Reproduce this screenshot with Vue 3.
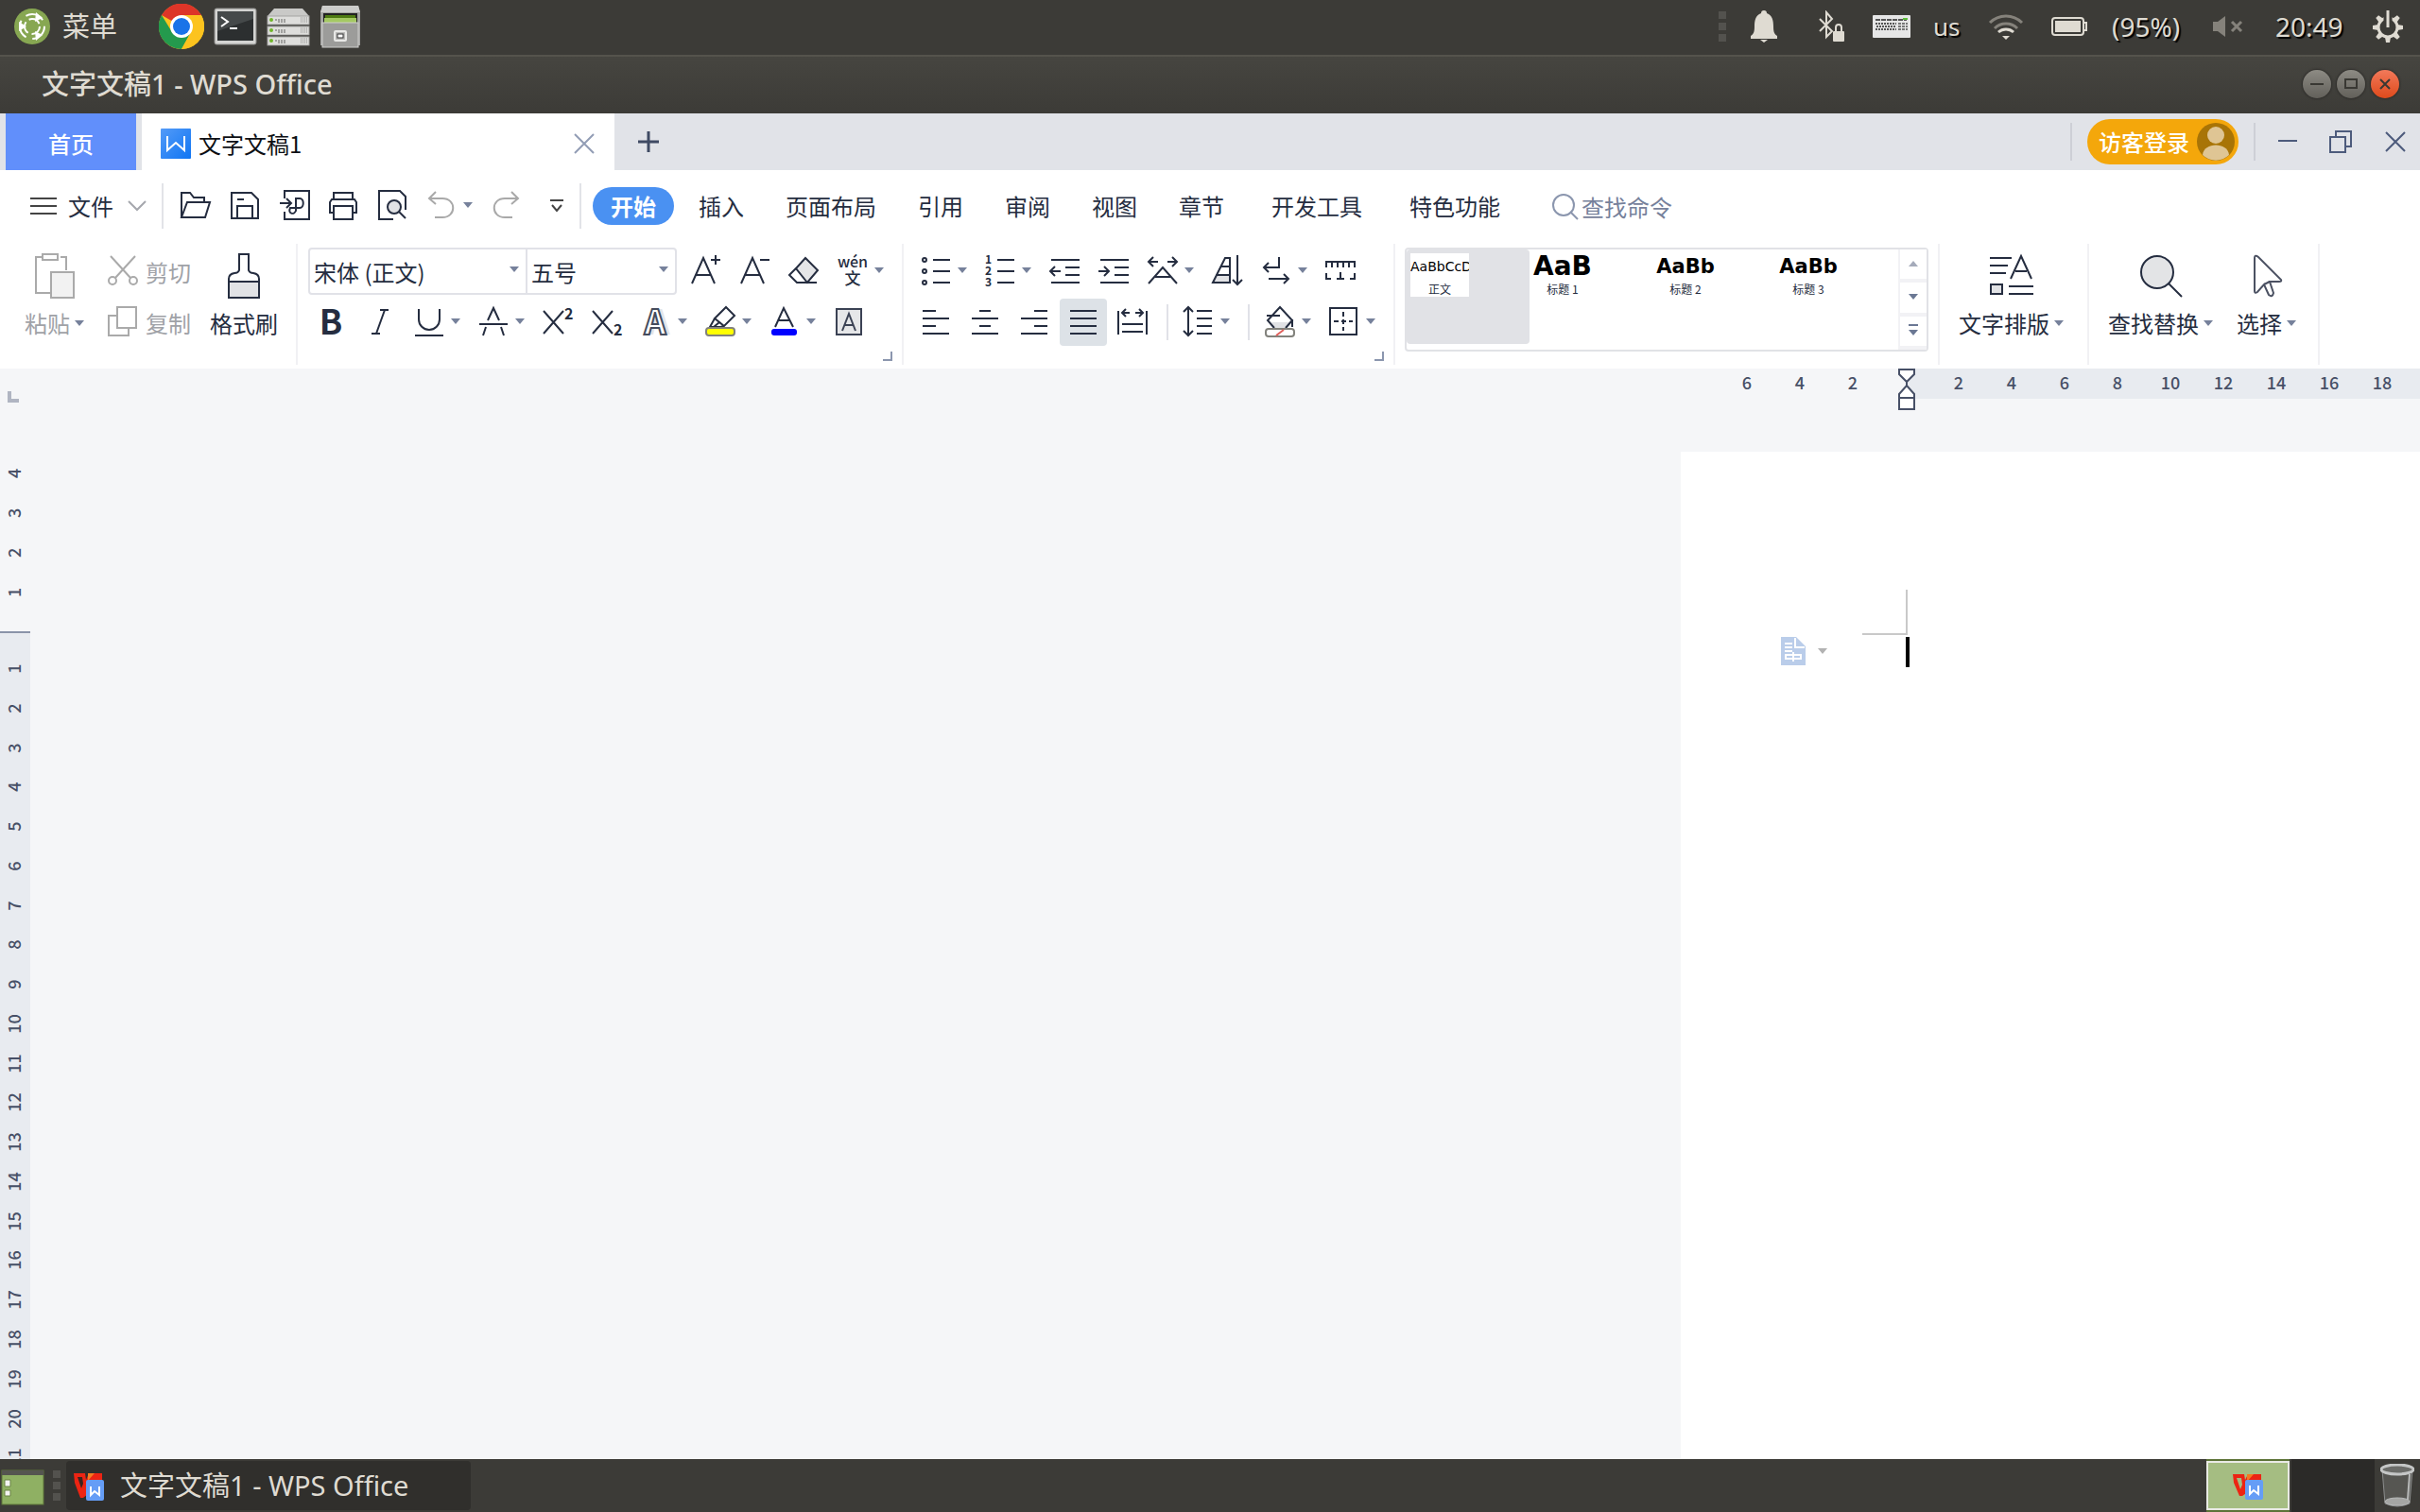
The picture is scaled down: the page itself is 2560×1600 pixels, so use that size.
<script setup>
import { ref } from 'vue'

const A_LARGE = '<path d="M2 30 14 3 26 30M6 21H22"/>'

const icons = {
  open: '<path d="M1 29V3H10L14 8H25V12M1 29 7 13H31L26 29Z"/>',
  save: '<path d="M2 3H23L30 10V30H2ZM8 30V17H24V30M8 10H15"/>',
  pdf: '<path d="M6 9V1H32V31H6V23M1 14H12M8 9 13 14 8 19M17 9H22C27 9 27 19 22 19H12C9 25 16 27 18 22V9"/>',
  print: '<path d="M6 10V3H26V10M6 24H2V13L4 10H28L30 13V24H26M6 17H26V31H6Z"/>',
  preview: '<path d="M17 31H2V1H24L30 7V21"/><circle cx="18" cy="18" r="7" fill="#e1e2e5"/><path d="M23 23 30 30"/>',
  undo: '<path d="M10 2 3 9 10 15M3 9H17C32 9 32 29 17 29H9" stroke="#a9a9a9"/>',
  redo: '<path d="M22 2 29 9 22 15M29 9H15C0 9 0 29 15 29H23" stroke="#a9a9a9"/>',
  grow: A_LARGE + '<path d="M27 0V10M22 5H32"/>',
  shrink: A_LARGE + '<path d="M22 5H32"/>',
  eraser: '<path d="M18 3 31 16 20 29 8 14Z" fill="#e4e5e7"/><path d="M8 14 1 21 9 29H30"/>',
  pinyin: '<text x="16" y="13" text-anchor="middle" font-size="16" font-weight="500">wén</text><text x="16" y="31" text-anchor="middle" font-size="17" font-weight="500">文</text>',
  bold: '<text x="16" y="30" text-anchor="middle" font-size="36" font-weight="700">B</text>',
  italic: '<path d="M16 4H25M7 29H16M21 4 12 29"/>',
  underline: '<path d="M5 3V14A11 11 0 0 0 27 14V3M1 31H31"/>',
  strike: '<path d="M10 15 16 2 22 15M1 19H31M5 31 8 22M27 31 24 22"/>',
  sup: '<path d="M1 5 22 29M22 5 1 29"/><text x="23" y="14" font-size="16" font-weight="700">2</text>',
  sub: '<path d="M1 5 22 29M22 5 1 29"/><text x="23" y="31" font-size="16" font-weight="700">2</text>',
  effect: '<text x="19" y="30" text-anchor="middle" font-size="36" font-weight="700" style="fill:#e3e4e8">A</text><text x="15" y="30" text-anchor="middle" font-size="36" font-weight="700" style="fill:#fff;stroke:#454c5d;stroke-width:2">A</text>',
  highlight: '<path d="M22 1 31 10 20 21 10 13ZM10 13 5 22H16L20 21M15 17 9 22"/><rect x="1" y="23" width="30" height="8" rx="3" fill="#ff0" stroke="#82827c"/>',
  color: '<path d="M6 22 15 2 25 22M9 15H21"/><rect x="2" y="24" width="27" height="7" rx="3" fill="#00f" stroke="none"/>',
  shade: '<rect x="3" y="3" width="26" height="27" fill="#e6e7e9" stroke="#3b4254"/><path d="M9 26 16 8 23 26M11 20H21" stroke="#3b4254"/>',
  bullets: '<path d="M13 5H31M13 17H31M13 29H31"/><circle cx="4" cy="5" r="2"/><circle cx="4" cy="17" r="2"/><circle cx="4" cy="29" r="2"/>',
  numbers: '<path d="M13 5H31M13 17H31M13 29H31"/><text x="0" y="9" font-size="12" font-weight="700">1</text><text x="0" y="21" font-size="12" font-weight="700">2</text><text x="0" y="33" font-size="12" font-weight="700">3</text>',
  outdent: '<path d="M2 5H32M17 13H32M17 21H32M2 29H32M1 17H12M6 12 1 17 6 22"/>',
  indent: '<path d="M2 5H32M17 13H32M17 21H32M2 29H32M0 17H11M6 12 11 17 6 22"/>',
  spread: '<path d="M1 7H11M6 2 1 7 6 12M21 7H31M26 2 31 7 26 12M1 30 16 13 31 30M8 23H24"/>',
  sort: '<path d="M1 29 5 21H19V29Z" fill="#e1e2e5"/><path d="M5 21 14 3H19V21M10 12H19M27 0V31M22 26 27 31 32 26"/>',
  wrap: '<path d="M19 2V13H3M8 8 3 13 8 18M8 25H29M24 20 29 25 24 30"/>',
  tabs: '<path d="M1 13V7H31V13M7 7V13M13 7V13M19 7V13M25 7V13M1 19V25H6M31 19V25H26M16 18V25M12 25H20"/>',
  left: '<path d="M2 5H16M2 13H30M2 21H16M2 29H30"/>',
  center: '<path d="M10 5H22M2 13H30M10 21H22M2 29H30"/>',
  right: '<path d="M16 5H30M2 13H30M16 21H30M2 29H30"/>',
  justify: '<path d="M2 5H30M2 13H30M2 21H30M2 29H30"/>',
  distribute: '<path d="M1 5V30M31 5V30M5 7H13M9 3 5 7 9 11M19 7H27M23 3 27 7 23 11M5 19H27M5 27H27"/>',
  spacing: '<path d="M14 5H30M14 13H30M14 21H30M14 29H30M5 2V30M0 6 5 1 10 6M0 26 5 31 10 26"/>',
  fill: '<path d="M7 17H29L20 26H12Z" fill="#e1e2e5" stroke="none"/><path d="M10 23 3 15 16 1 29 15 22 23M2 10H16M29 14V22"/><rect x="1" y="24" width="30" height="8" rx="3" fill="#fff" stroke="#82827c"/><path d="M12 31 20 25" stroke="#e0605c"/>',
  border: '<rect x="1" y="2" width="28" height="28"/><path d="M15 6V26M5 16H25" stroke-dasharray="5 3"/>'
}

const quick = [
  { id: 'open', name: '打开' },
  { id: 'save', name: '保存' },
  { id: 'pdf', name: '输出为PDF' },
  { id: 'print', name: '打印' },
  { id: 'preview', name: '打印预览' },
  { id: 'undo', name: '撤销', drop: true },
  { id: 'redo', name: '恢复' }
]
const menus = ['插入', '页面布局', '引用', '审阅', '视图', '章节', '开发工具', '特色功能']
const fontTop = [
  { id: 'grow', name: '增大字号' },
  { id: 'shrink', name: '减小字号' },
  { id: 'eraser', name: '清除格式' },
  { id: 'pinyin', name: '拼音指南', drop: true }
]
const fontBottom = [
  { id: 'bold', name: '加粗' },
  { id: 'italic', name: '倾斜' },
  { id: 'underline', name: '下划线', drop: true },
  { id: 'strike', name: '删除线', drop: true },
  { id: 'sup', name: '上标' },
  { id: 'sub', name: '下标' },
  { id: 'effect', name: '文字效果', drop: true },
  { id: 'highlight', name: '突出显示', drop: true },
  { id: 'color', name: '字体颜色', drop: true },
  { id: 'shade', name: '字符底纹' }
]
const paraTop = [
  { id: 'bullets', name: '项目符号', drop: true },
  { id: 'numbers', name: '编号', drop: true },
  { id: 'outdent', name: '减少缩进' },
  { id: 'indent', name: '增加缩进' },
  { id: 'spread', name: '中文版式', drop: true },
  { id: 'sort', name: '排序' },
  { id: 'wrap', name: '显示段落标记', drop: true },
  { id: 'tabs', name: '制表位' }
]
const paraBottom = [
  { id: 'left', name: '左对齐' },
  { id: 'center', name: '居中' },
  { id: 'right', name: '右对齐' },
  { id: 'justify', name: '两端对齐', on: true },
  { id: 'distribute', name: '分散对齐', sep: true },
  { id: 'spacing', name: '行距', drop: true, sep: true },
  { id: 'fill', name: '底纹颜色', drop: true },
  { id: 'border', name: '边框', drop: true }
]
const styles = [
  { sample: 'AaBbCcDd', label: '正文', kind: 'body' },
  { sample: 'AaBb', label: '标题 1', kind: 'h1' },
  { sample: 'AaBb', label: '标题 2', kind: 'h2' },
  { sample: 'AaBb', label: '标题 3', kind: 'h2' }
]
const font = ref('宋体 (正文)')
const size = ref('五号')
const query = ref('')
</script>

<template>
  <div class="desktop">
    <header class="panel">
      <button class="menu-btn">
        <svg width="40" height="42" viewBox="0 0 40 42" aria-hidden="true">
          <circle cx="20" cy="21" r="19" fill="#87a752" />
          <circle cx="20" cy="21" r="13" fill="none" stroke="#fff" stroke-width="2" stroke-dasharray="20 7" />
          <circle cx="20" cy="21" r="8" fill="none" stroke="#fff" stroke-width="2" stroke-dasharray="13 4" />
          <path d="M6 16v10l8-5zM24 6l7 6-8 4zM24 36l7-6-8-4z" fill="#fff" />
        </svg>
        <span>菜单</span>
      </button>
      <div class="launchers">
        <button aria-label="Chrome">
          <svg width="48" height="48" viewBox="0 0 48 48">
            <circle cx="24" cy="24" r="24" fill="#fcc31e" />
            <path d="M24 24 3 12A24 24 0 0 1 45 12H24Z" fill="#dd3528" />
            <path d="M24 48A24 24 0 0 1 3 12L14 30 24 35 34 30Z" fill="#249a4d" />
            <path d="M24 48A24 24 0 0 0 45 12H24L34 30Z" fill="#fcc31e" />
            <circle cx="24" cy="24" r="12" fill="#fff" />
            <circle cx="24" cy="24" r="9" fill="#1a73e8" />
          </svg>
        </button>
        <button aria-label="终端">
          <svg width="46" height="40" viewBox="0 0 46 40">
            <rect x="1" y="1" width="44" height="38" rx="2" fill="#d4d4d2" stroke="#8b8b89" />
            <rect x="4" y="4" width="38" height="31" fill="#2c2f30" />
            <path d="M4 4H42V12L4 25Z" fill="#45494a" />
            <path d="M8 10 15 15 8 20M17 22H25" fill="none" stroke="#fff" stroke-width="2" />
          </svg>
        </button>
        <button aria-label="服务器">
          <svg width="46" height="42" viewBox="0 0 46 42">
            <path d="M8 2H38L45 10H1Z" fill="#c9c9c7" />
            <g v-for="y in [10, 21, 32]" :key="y">
              <rect x="1" :y="y" width="44" height="9" fill="#dededc" stroke="#a3a3a1" />
              <path :d="`M0 ${y + 10}h46`" stroke="#4a4a48" />
              <circle cx="5" :cy="y + 4" r="2" fill="#6fb52a" />
              <path :d="`M9 ${y + 4}h12M12 ${y + 6}h9`" stroke="#656563" stroke-dasharray="2 1" />
              <path :d="`M36 ${y + 2}h8M36 ${y + 4}h8M36 ${y + 6}h8`" stroke="#8b8b89" stroke-dasharray="1 1" />
            </g>
          </svg>
        </button>
        <button aria-label="文件管理器">
          <svg width="44" height="46" viewBox="0 0 44 46">
            <path d="M3 1H41L43 8V43H1V8Z" fill="#a5a5a3" />
            <path d="M3 1H41L43 8H1Z" fill="#cdcdcb" />
            <rect x="4" y="9" width="36" height="10" fill="#222" />
            <rect x="6" y="11" width="32" height="3" fill="#4e7a12" />
            <rect x="5" y="14" width="34" height="5" fill="#a4c963" />
            <rect x="3" y="19" width="38" height="26" fill="#9c9c9a" stroke="#cfcfcd" />
            <rect x="16" y="28" width="12" height="10" rx="1" fill="#b9b9b7" stroke="#e8e8e6" stroke-width="2" />
            <rect x="19" y="31" width="6" height="4" fill="#fff" stroke="#333" />
          </svg>
        </button>
      </div>
      <div class="tray">
        <span class="grip"><i></i><i></i><i></i></span>
        <svg class="t-bell" width="28" height="34" viewBox="0 0 28 34">
          <path d="M14 0a3 3 0 0 1 3 3c6 2 7 8 7 14 0 6 1 8 4 10v3H0v-3c3-2 4-4 4-10C4 11 5 5 11 3a3 3 0 0 1 3-3zM10 31h8l-4 3z" fill="#dfdbd2" />
        </svg>
        <svg class="t-bt" width="28" height="34" viewBox="0 0 28 34">
          <path d="M1 9 14 22 8 28V2L14 9 1 22" fill="none" stroke="#dfdbd2" stroke-width="2" />
          <rect x="15" y="22" width="12" height="11" rx="1" fill="#dfdbd2" />
          <path d="M18 23V18a3 3 0 0 1 6 0V23" fill="none" stroke="#dfdbd2" stroke-width="2" />
        </svg>
        <svg class="t-kbd" width="40" height="24" viewBox="0 0 40 24">
          <rect width="40" height="24" rx="1" fill="#e6e6e6" />
          <path d="M3 5H36" stroke="#555" stroke-width="2" stroke-dasharray="5 1" />
          <path d="M3 9H25M4 12H25M3 15H25" stroke="#555" stroke-width="2" stroke-dasharray="2 1" />
          <path d="M27 9H37M27 12H37M27 15H37" stroke="#777" stroke-width="2" stroke-dasharray="3 1" />
          <path d="M32 4H37" stroke="#5cbd3a" stroke-width="2" />
        </svg>
        <span class="t-lang">us</span>
        <svg class="t-wifi" width="38" height="28" viewBox="0 0 38 28">
          <path d="M2 10a24 24 0 0 1 34 0M7 16a17 17 0 0 1 24 0" fill="none" stroke="#85827b" stroke-width="3" />
          <path d="M11 20a12 12 0 0 1 16 0" fill="none" stroke="#dfdbd2" stroke-width="3" />
          <path d="M15 24h8l-4 4z" fill="#dfdbd2" />
        </svg>
        <svg class="t-bat" width="38" height="20" viewBox="0 0 38 20">
          <rect x="1" y="1" width="33" height="18" rx="3" fill="none" stroke="#dfdbd2" stroke-width="2" />
          <rect x="4" y="4" width="27" height="12" fill="#dfdbd2" />
          <path d="M35 6h2v8h-2" fill="none" stroke="#dfdbd2" stroke-width="2" />
        </svg>
        <span class="t-pct">(95%)</span>
        <svg class="t-vol" width="32" height="22" viewBox="0 0 32 22">
          <path d="M0 6H5L13 0V22L5 16H0Z" fill="#85827b" />
          <path d="M20 6 30 16M30 6 20 16" stroke="#85827b" stroke-width="3" />
        </svg>
        <span class="t-time">20:49</span>
        <svg class="t-gear" width="32" height="34" viewBox="0 0 32 34">
          <path v-for="a in [45, 90, 135, 180, 225, 270, 315]" :key="a" d="M14 2H18L19 8H13Z" fill="#dfdbd2" :transform="`rotate(${a} 16 18)`" />
          <circle cx="16" cy="18" r="10" fill="none" stroke="#dfdbd2" stroke-width="3" />
          <path d="M16 4V16" stroke="#3c3b37" stroke-width="9" />
          <path d="M16 0V18" stroke="#dfdbd2" stroke-width="3" />
        </svg>
      </div>
    </header>

    <div class="titlebar">
      <h1>文字文稿1 - WPS Office</h1>
      <div class="win-btns">
        <button aria-label="最小化"><svg width="30" height="30" viewBox="0 0 30 30"><path d="M8 15H22" /></svg></button>
        <button aria-label="最大化"><svg width="30" height="30" viewBox="0 0 30 30"><rect x="9" y="10" width="12" height="9" /></svg></button>
        <button class="close" aria-label="关闭"><svg width="30" height="30" viewBox="0 0 30 30"><path d="M10 10 20 20M20 10 10 20" /></svg></button>
      </div>
    </div>

    <div class="tabbar">
      <button class="home">首页</button>
      <div class="doc-tab">
        <svg width="32" height="32" viewBox="0 0 32 32" aria-hidden="true">
          <defs>
            <linearGradient id="wg" x1="0" y1="0" x2="1" y2="1">
              <stop offset="0" stop-color="#549bf8" />
              <stop offset="1" stop-color="#0f75f3" />
            </linearGradient>
          </defs>
          <rect width="32" height="32" rx="1" fill="url(#wg)" />
          <path d="M7 8V23L16 15 25 23V8" fill="none" stroke="#fff" stroke-width="2" />
        </svg>
        <span>文字文稿1</span>
        <button class="tab-close" aria-label="关闭标签"><svg width="22" height="22" viewBox="0 0 22 22"><path d="M1 1 21 21M21 1 1 21" /></svg></button>
      </div>
      <button class="add" aria-label="新建"><svg width="24" height="24" viewBox="0 0 24 24"><path d="M12 1V23M1 12H23" /></svg></button>
      <div class="session">
        <i class="bar"></i>
        <button class="login">
          <span>访客登录</span>
          <svg width="40" height="40" viewBox="0 0 40 40" aria-hidden="true">
            <circle cx="20" cy="20" r="20" fill="#a87406" />
            <circle cx="20" cy="13" r="9" fill="#dfc594" />
            <path d="M6 34C7 20 33 20 34 34A20 20 0 0 1 6 34Z" fill="#dfc594" />
          </svg>
        </button>
        <i class="bar"></i>
        <button class="w-btn" aria-label="最小化窗口"><svg width="24" height="24" viewBox="0 0 24 24"><path d="M2 11H22" /></svg></button>
        <button class="w-btn" aria-label="还原窗口"><svg width="24" height="24" viewBox="0 0 24 24"><path d="M1 7H17V23H1ZM7 7V1H23V17H17" /></svg></button>
        <button class="w-btn" aria-label="关闭窗口"><svg width="24" height="24" viewBox="0 0 24 24"><path d="M2 2 22 22M22 2 2 22" /></svg></button>
      </div>
    </div>

    <nav class="menubar">
      <button class="file">
        <svg width="28" height="20" viewBox="0 0 28 20" aria-hidden="true"><path d="M0 2H28M0 10H28M0 18H28" stroke="#444" /></svg>
        <span>文件</span>
        <svg class="chev" width="20" height="12" viewBox="0 0 20 12" aria-hidden="true"><path d="M1 1 10 10 19 1" stroke="#a5a7ad" /></svg>
      </button>
      <i class="bar"></i>
      <div class="quick">
        <button v-for="t in quick" :key="t.id" class="tool" :aria-label="t.name">
          <svg class="ico" width="32" height="32" viewBox="0 0 32 32" v-html="icons[t.id]"></svg>
          <i v-if="t.drop" class="caret"></i>
        </button>
        <button class="custom" aria-label="自定义快速访问工具栏">
          <svg width="16" height="16" viewBox="0 0 16 16"><path d="M1 2H15M3 7 8 13 13 7" stroke="#444" /></svg>
        </button>
      </div>
      <i class="bar"></i>
      <button class="menu active">开始</button>
      <button v-for="(m, i) in menus" :key="m" class="menu" :class="{ far: i > 5 }">{{ m }}</button>
      <label class="search">
        <svg width="30" height="30" viewBox="0 0 30 30" aria-hidden="true"><circle cx="13" cy="13" r="11" /><path d="M20 20 28 28" /></svg>
        <input v-model="query" type="text" placeholder="查找命令" aria-label="查找命令" />
      </label>
    </nav>

    <div class="ribbon">
      <section class="group clip">
        <button class="big muted">
          <svg class="ico" width="46" height="50" viewBox="0 0 46 50" aria-hidden="true">
            <path d="M9 4H3V42H19M29 4H35V18M10 1H26V7H10Z" stroke="#aaa" />
            <rect x="19" y="20" width="24" height="27" fill="#f2f2f2" stroke="#aaa" />
          </svg>
          <span>粘贴<i class="caret"></i></span>
        </button>
        <div class="pair">
          <button class="small muted">
            <svg class="ico" width="32" height="32" viewBox="0 0 32 32" aria-hidden="true">
              <path d="M3 1 24 24M29 1 8 24" stroke="#aaa" /><circle cx="5" cy="27" r="4" stroke="#aaa" /><circle cx="27" cy="27" r="4" stroke="#aaa" />
            </svg>
            <span>剪切</span>
          </button>
          <button class="small muted">
            <svg class="ico" width="32" height="32" viewBox="0 0 32 32" aria-hidden="true">
              <path d="M10 1H30V23H10ZM10 10H1V31H22V23" stroke="#aaa" />
            </svg>
            <span>复制</span>
          </button>
        </div>
        <button class="big">
          <svg class="ico" width="46" height="50" viewBox="0 0 46 50" aria-hidden="true">
            <path d="M7 30H39V47H7Z" fill="#e1e2e5" />
            <path d="M18 1H28V18Q29 21 33 21Q39 22 39 27V47H7V27Q7 22 13 21Q17 21 18 18Z" />
          </svg>
          <span>格式刷</span>
        </button>
      </section>

      <section class="group fonts">
        <div class="line">
          <div class="combos">
            <label class="combo family">
              <select v-model="font" aria-label="字体"><option>宋体 (正文)</option></select><i class="caret"></i>
            </label>
            <label class="combo size">
              <select v-model="size" aria-label="字号"><option>五号</option></select><i class="caret"></i>
            </label>
          </div>
          <button v-for="t in fontTop" :key="t.id" class="tool" :aria-label="t.name">
            <svg class="ico" width="32" height="32" viewBox="0 0 32 32" v-html="icons[t.id]"></svg>
            <i v-if="t.drop" class="caret"></i>
          </button>
        </div>
        <div class="line second">
          <button v-for="t in fontBottom" :key="t.id" class="tool" :aria-label="t.name">
            <svg class="ico" width="32" height="32" viewBox="0 0 32 32" v-html="icons[t.id]"></svg>
            <i v-if="t.drop" class="caret"></i>
          </button>
        </div>
        <button class="corner" aria-label="字体设置"></button>
      </section>

      <section class="group para">
        <div class="line">
          <button v-for="t in paraTop" :key="t.id" class="tool" :aria-label="t.name">
            <svg class="ico" width="32" height="32" viewBox="0 0 32 32" v-html="icons[t.id]"></svg>
            <i v-if="t.drop" class="caret"></i>
          </button>
        </div>
        <div class="line">
          <template v-for="t in paraBottom" :key="t.id">
            <button class="tool" :class="{ on: t.on }" :aria-label="t.name">
              <svg class="ico" width="32" height="32" viewBox="0 0 32 32" v-html="icons[t.id]"></svg>
              <i v-if="t.drop" class="caret"></i>
            </button>
            <i v-if="t.sep" class="sep"></i>
          </template>
        </div>
        <button class="corner" aria-label="段落设置"></button>
      </section>

      <section class="group gallery-group">
        <div class="gallery">
          <button v-for="(s, i) in styles" :key="s.label" class="style" :class="{ chosen: i === 0 }">
            <span class="card">
              <span class="sample" :class="s.kind">{{ s.sample }}</span>
              <span class="cap">{{ s.label }}</span>
            </span>
          </button>
          <div class="scroller">
            <button aria-label="上一行"><svg width="10" height="6" viewBox="0 0 10 6"><path d="M0 6 5 0 10 6Z" fill="#a5abba" /></svg></button>
            <button aria-label="下一行"><svg width="10" height="6" viewBox="0 0 10 6"><path d="M0 0 5 6 10 0Z" fill="#6b7894" /></svg></button>
            <button aria-label="更多样式"><svg width="10" height="12" viewBox="0 0 10 12"><path d="M0 0H10V2H0ZM0 6 5 12 10 6Z" fill="#6b7894" /></svg></button>
          </div>
        </div>
      </section>

      <section class="group typeset">
        <button class="big">
          <svg class="ico" width="46" height="50" viewBox="0 0 46 50" aria-hidden="true">
            <path d="M0 5H23M0 13H19M0 21H17M20 35H46M20 43H46M22 27 33 3 44 27M27 19H39" />
            <rect x="1" y="33" width="12" height="10" fill="#e1e2e5" />
          </svg>
          <span>文字排版<i class="caret"></i></span>
        </button>
      </section>

      <section class="group editing">
        <button class="big">
          <svg class="ico" width="46" height="50" viewBox="0 0 46 50" aria-hidden="true">
            <circle cx="19" cy="20" r="17" fill="#e3e4e6" /><path d="M31 32 45 46" />
          </svg>
          <span>查找替换<i class="caret"></i></span>
        </button>
        <button class="big">
          <svg class="ico" width="46" height="50" viewBox="0 0 46 50" aria-hidden="true">
            <path d="M10 5Q10 1 14 4L38 28Q39 30 36 30H26L30 42Q29 47 25 44L20 33 13 41Q10 43 10 40ZM20 33 26 30" stroke="#4b5162" />
          </svg>
          <span>选择<i class="caret"></i></span>
        </button>
      </section>
    </div>

    <main class="workspace">
      <aside class="v-ruler">
        <div class="tab-kind"><i></i></div>
        <div class="v-before"><span v-for="n in [4, 3, 2, 1]" :key="n">{{ n }}</span></div>
        <div class="v-after">
          <div class="v-scale"><span v-for="n in 21" :key="n">{{ n }}</span></div>
        </div>
      </aside>
      <div class="canvas">
        <div class="h-ruler">
          <div class="h-before"><span v-for="n in [6, 4, 2]" :key="n">{{ n }}</span></div>
          <div class="h-after">
            <svg class="indent" width="18" height="44" viewBox="0 0 18 44" aria-hidden="true">
              <path d="M1 1H17V6L9 14 1 6ZM9 14V18M1 31V27L9 18 17 27V31ZM1 31H17V43H1Z" fill="#fff" stroke="#475067" stroke-width="2" />
            </svg>
            <span v-for="n in 9" :key="n">{{ n * 2 }}</span>
          </div>
        </div>
        <article class="paper">
          <button class="doc-opts" aria-label="页面选项">
            <svg width="26" height="30" viewBox="0 0 26 30">
              <path d="M0 0H16L26 10V30H0Z" fill="#bacdea" />
              <path d="M15 1V11H25M4 7H12M4 11H12M4 15H12M5 19H21V23H5ZM13 16V26" fill="none" stroke="#fff" stroke-width="2" />
            </svg>
            <i class="caret"></i>
          </button>
          <i class="crop"></i>
          <i class="cursor"></i>
        </article>
      </div>
    </main>

    <footer class="taskbar">
      <button class="show-desktop" aria-label="显示桌面">
        <svg width="46" height="38" viewBox="0 0 46 38">
          <rect x="1" y="1" width="44" height="36" fill="#8fb063" stroke="#5f793b" />
          <rect x="1" y="1" width="44" height="5" fill="#555550" />
          <path d="M4 11H10V18H4ZM4 22H10V28H4Z" fill="#f4f4f2" stroke="#6a8445" />
        </svg>
      </button>
      <span class="grip"><i></i><i></i><i></i></span>
      <button class="task">
        <svg width="32" height="30" viewBox="0 0 32 30" aria-hidden="true">
          <path d="M0 0H12L13 7 16 0H30V10L10 26H7L1 10Z" fill="#ec2413" />
          <path d="M4 4 8 16 10 11 9 4Z" fill="#3b2320" /><path d="M15 0 22 0 15 8Z" fill="#f47a20" />
          <rect x="13" y="7" width="19" height="22" rx="2" fill="#659df6" />
          <path d="M18 14V23L22 19 27 23V14" fill="none" stroke="#fff" stroke-width="2" />
        </svg>
        <span>文字文稿1 - WPS Office</span>
      </button>
      <div class="pager">
        <button class="ws current" aria-label="工作区 1">
          <svg width="32" height="30" viewBox="0 0 32 30">
            <path d="M0 1H12L13 7 16 1H30V10L10 24H7L1 10Z" fill="#ec2413" />
            <path d="M4 5 8 17 10 12 9 5Z" fill="#a5bd82" /><path d="M15 1 22 1 15 9Z" fill="#f47a20" />
            <rect x="13" y="7" width="19" height="21" rx="2" fill="#659df6" />
            <path d="M18 13V22L22 18 27 22V13" fill="none" stroke="#fff" stroke-width="2" />
          </svg>
        </button>
        <button class="ws" aria-label="工作区 2"></button>
        <button class="trash" aria-label="回收站">
          <svg width="36" height="46" viewBox="0 0 36 46">
            <path d="M2 6 5 42Q18 48 31 42L34 6Z" fill="#565652" stroke="#8b8d8d" />
            <ellipse cx="18" cy="40" rx="13" ry="4" fill="#a5a6a4" stroke="#b9bbbb" />
            <ellipse cx="18" cy="6" rx="17" ry="5" fill="#6b6c69" stroke="#c4c6c6" stroke-width="3" />
            <path d="M31 11 29 38" stroke="#b9bbbb" stroke-width="2" />
          </svg>
        </button>
      </div>
    </footer>
  </div>
</template>

<style>
html,
body {
  margin: 0;
}
</style>

<style scoped>
.desktop {
  --ink: #252d40;
  --caret: #76819b;
  --chrome: #3c3b37;
  display: flex;
  flex-direction: column;
  height: 100vh;
  overflow: hidden;
  background: #fff;
  color: var(--ink);
  font: 24px/32px "Noto Sans CJK SC", sans-serif;
}
.desktop *,
.desktop *::before {
  box-sizing: border-box;
}
button {
  display: flex;
  align-items: center;
  flex: none;
  margin: 0;
  padding: 0;
  border: 0;
  background: none;
  color: inherit;
  font: inherit;
  white-space: nowrap;
}
svg {
  display: block;
  flex: none;
}
i {
  display: block;
  flex: none;
}

/* desktop panels */
.panel {
  display: flex;
  align-items: center;
  flex: none;
  height: 58px;
  padding: 0 18px 2px 14px;
  background: var(--chrome);
  color: #dfdbd2;
  font: 29px/40px "Noto Sans", "Noto Sans CJK SC", sans-serif;
  text-shadow: 2px 2px 1px #000;
}
.menu-btn {
  gap: 12px;
  width: 154px;
}
.launchers {
  display: flex;
  align-items: center;
  gap: 10px;
}
.tray {
  display: flex;
  align-items: center;
  margin-left: auto;
  font-size: 28px;
}
.grip {
  display: flex;
  flex-direction: column;
  gap: 4px;
  margin-right: 26px;
}
.grip i {
  width: 8px;
  height: 8px;
  background: #53524e;
}
.t-bell { margin-right: 44px; }
.t-bt { margin-right: 29px; }
.t-kbd { margin-right: 24px; }
.t-lang { width: 58px; font-size: 26px; }
.t-wifi { margin-right: 29px; }
.t-bat { margin-right: 26px; }
.t-pct { width: 107px; }
.t-vol { margin-right: 34px; }
.t-time { width: 103px; }

.titlebar {
  display: flex;
  align-items: center;
  justify-content: space-between;
  flex: none;
  height: 62px;
  padding: 0 22px 2px 44px;
  border-top: 2px solid #55534c;
  background: linear-gradient(#464540, #3c3b37);
}
h1 {
  margin: 0;
  color: #dfdbd2;
  font: 500 29px/40px "Noto Sans", "Noto Sans CJK SC", sans-serif;
}
.win-btns {
  display: flex;
  gap: 6px;
}
.win-btns button {
  border-radius: 50%;
  background: linear-gradient(#8d8b84, #62605a);
  box-shadow: 0 0 2px 1px #2f2e2b;
}
.win-btns .close {
  background: linear-gradient(#f2795a, #df4a1b);
}
.win-btns svg {
  fill: none;
  stroke: #393833;
  stroke-width: 2;
}

/* document tabs */
.tabbar {
  display: flex;
  align-items: center;
  flex: none;
  height: 60px;
  padding-left: 6px;
  background: #e1e3e8;
}
.home {
  justify-content: center;
  width: 138px;
  height: 60px;
  padding-top: 4px;
  background: #618ffb;
  color: #fff;
  font-weight: 500;
}
.doc-tab {
  display: flex;
  align-items: center;
  gap: 8px;
  width: 500px;
  height: 60px;
  margin-left: 6px;
  padding: 4px 21px 0 20px;
  background: #fff;
  color: #0d0f14;
}
.tab-close {
  margin-left: auto;
}
.tab-close svg {
  fill: none;
  stroke: #929db5;
  stroke-width: 2;
}
.add {
  margin-left: 24px;
}
.add svg {
  fill: none;
  stroke: #3f4a63;
  stroke-width: 3;
}
.session {
  display: flex;
  align-items: center;
  margin-left: auto;
  padding-right: 14px;
}
.session .bar {
  width: 2px;
  height: 40px;
  background: #cdcfd6;
}
.login {
  justify-content: space-between;
  width: 160px;
  height: 48px;
  margin: 0 16px;
  padding: 0 4px 0 12px;
  border-radius: 24px;
  background: #f4a70b;
  color: #fff;
  font-weight: 500;
}
.w-btn {
  margin-left: 32px;
}
.w-btn:last-child {
  margin-left: 34px;
}
.bar + .w-btn {
  margin-left: 22px;
}
.w-btn svg {
  fill: none;
  stroke: #4d5b7c;
  stroke-width: 2;
}

/* menu row */
.menubar {
  display: flex;
  align-items: center;
  flex: none;
  height: 76px;
  padding-left: 32px;
}
.menubar > .bar {
  width: 2px;
  height: 48px;
  background: #e2e3e8;
}
.menubar svg {
  fill: none;
  stroke-width: 2;
}
.file {
  gap: 12px;
  width: 139px;
}
.file .chev {
  margin-left: 3px;
}
.quick {
  display: flex;
  align-items: center;
  gap: 20px;
  width: 440px;
  padding-left: 18px;
}
.custom {
  margin-left: 10px;
}
.menu {
  height: 40px;
  padding: 0 22px;
  border-radius: 20px;
}
.menu.active {
  margin: 0 4px 0 12px;
  padding: 0 19px;
  background: #4a91f2;
  color: #fff;
  font-weight: 700;
}
.menu.far {
  margin-left: 6px;
}
.search {
  display: flex;
  align-items: center;
  gap: 2px;
  margin-left: 32px;
  padding-top: 2px;
}
.search svg {
  stroke: #8b96ae;
}
.search input {
  width: 200px;
  padding: 0;
  border: 0;
  outline: 0;
  background: none;
  color: var(--ink);
  font: inherit;
}
.search input::placeholder {
  color: #76819b;
  opacity: 1;
}

/* ribbon */
.ribbon {
  display: flex;
  flex: none;
  height: 134px;
  padding: 2px 0 4px;
}
.group {
  position: relative;
  display: flex;
  flex: none;
  border-right: 2px solid #f1f1f4;
}
.ico {
  overflow: visible;
  fill: none;
  stroke: var(--ink);
  stroke-width: 2;
}
.ico :deep(text) {
  fill: var(--ink);
  stroke: none;
  font-family: "Noto Sans CJK SC", sans-serif;
}
.caret {
  width: 10px;
  height: 6px;
  background: var(--caret);
  clip-path: polygon(0 0, 100% 0, 50% 100%);
}
.tool {
  padding-bottom: 2px;
}
.tool .caret {
  margin: 0 -1px 0 7px;
}
.big {
  flex-direction: column;
  justify-content: flex-start;
  padding-top: 10px;
}
.big span {
  display: flex;
  align-items: center;
  height: 32px;
  margin-top: 8px;
}
.big .caret {
  margin-left: 5px;
}
.muted {
  color: #a0a2a7;
}
.clip {
  width: 315px;
  padding-left: 26px;
}
.clip .big:last-child {
  margin-left: 20px;
}
.pair {
  display: flex;
  flex-direction: column;
  gap: 22px;
  margin-left: 25px;
  padding-top: 12px;
}
.small {
  gap: 8px;
  height: 32px;
}
.small span {
  padding-top: 4px;
}
.line {
  display: flex;
  align-items: center;
  gap: 20px;
  height: 50px;
}
.fonts,
.para {
  flex-direction: column;
  gap: 4px;
  padding-top: 4px;
}
.fonts {
  width: 641px;
  padding-left: 11px;
}
.fonts .second {
  padding-left: 8px;
}
.combos {
  display: flex;
  width: 390px;
  height: 50px;
  margin-right: -6px;
  border: 2px solid #e1e2e8;
  border-radius: 4px;
}
.combo {
  position: relative;
  flex: none;
  width: 156px;
}
.combo.family {
  width: 230px;
  border-right: 2px solid #e1e2e8;
}
.combo select {
  width: 100%;
  height: 46px;
  padding: 2px 30px 0 4px;
  border: 0;
  outline: 0;
  appearance: none;
  background: none;
  color: var(--ink);
  font: inherit;
}
.combo .caret {
  position: absolute;
  top: 18px;
  right: 7px;
}
.para {
  width: 520px;
  padding-left: 18px;
}
.on {
  position: relative;
}
.on::before {
  content: "";
  position: absolute;
  inset: -8px -9px;
  border-radius: 4px;
  background: #dde2e7;
}
.on .ico {
  position: relative;
}
.sep {
  width: 2px;
  height: 38px;
  margin-right: -4px;
  background: #e1e2e8;
}
.corner {
  position: absolute;
  right: 10px;
  bottom: 4px;
  width: 10px;
  height: 10px;
  border: solid #8b96ae;
  border-width: 0 2px 2px 0;
}
.gallery-group {
  width: 576px;
  padding: 4px 0 0 10px;
}
.gallery {
  display: flex;
  width: 554px;
  height: 110px;
  border: 2px solid #e1e2e6;
  border-radius: 4px;
}
.style {
  align-items: flex-start;
  width: 130px;
  height: 100px;
  padding: 4px;
  border-radius: 4px;
}
.chosen {
  background: #e1e2e6;
}
.card {
  display: flex;
  flex-direction: column;
  width: 62px;
  height: 46px;
  overflow: hidden;
  background: #fff;
}
.sample {
  height: 30px;
  color: #000;
  font: 14px/28px "DejaVu Sans", sans-serif;
}
.sample.h1 {
  font-weight: 700;
  font-size: 28px;
}
.sample.h2 {
  font-weight: 700;
  font-size: 21px;
}
.cap {
  font-size: 12px;
  line-height: 16px;
  text-align: center;
}
.scroller {
  display: flex;
  flex-direction: column;
  gap: 4px;
  width: 30px;
  padding: 0 0 4px 2px;
  background: #f2f2f5;
}
.scroller button {
  flex: 1;
  justify-content: center;
  padding-bottom: 2px;
  background: #fff;
}
.typeset {
  width: 158px;
  padding-left: 20px;
}
.editing {
  width: 244px;
  gap: 25px;
  padding-left: 20px;
}

/* workspace */
.workspace {
  display: flex;
  flex: 1;
  min-height: 0;
  background: #f5f6f8;
  color: #475067;
  font-size: 18px;
  font-weight: 500;
  line-height: 20px;
}
.v-ruler {
  display: flex;
  flex-direction: column;
  flex: none;
  width: 32px;
  overflow: hidden;
}
.tab-kind {
  flex: none;
  height: 90px;
  padding: 24px 0 0 8px;
}
.tab-kind i {
  width: 12px;
  height: 12px;
  border: solid #b0b5c2;
  border-width: 0 0 4px 4px;
}
.v-before {
  flex: none;
  height: 190px;
  border-bottom: 2px solid #8a94a9;
}
.v-ruler span {
  display: flex;
  align-items: center;
  justify-content: center;
  width: 28px;
  writing-mode: vertical-rl;
  transform: rotate(180deg);
}
.v-before span {
  height: 42px;
}
.v-after {
  flex: 1;
  min-height: 0;
  background: #e8ebf0;
  padding-top: 17px;
}
.v-scale {
  display: flex;
  flex-direction: column;
  height: 877px;
}
.v-scale span {
  flex: 1;
}
.canvas {
  display: flex;
  flex-direction: column;
  flex: 1;
  min-width: 0;
}
.h-ruler {
  display: flex;
  flex: none;
  height: 32px;
}
.h-ruler span {
  flex: none;
  width: 56px;
  text-align: center;
  line-height: 29px;
}
.h-before {
  display: flex;
  flex: 1;
  justify-content: flex-end;
  padding-right: 28px;
}
.h-after {
  position: relative;
  display: flex;
  flex: none;
  width: 544px;
  padding-left: 28px;
  background: #e8ebf0;
}
.indent {
  position: absolute;
  top: 0;
  left: -8px;
}
.paper {
  position: relative;
  flex: 1;
  align-self: flex-end;
  width: 782px;
  margin-top: 56px;
  background: #fff;
}
.doc-opts {
  position: absolute;
  top: 196px;
  left: 106px;
  gap: 13px;
}
.doc-opts .caret {
  background: #b2b2b2;
}
.crop {
  position: absolute;
  top: 146px;
  left: 192px;
  width: 48px;
  height: 48px;
  border: solid #c9c9c9;
  border-width: 0 2px 2px 0;
}
.cursor {
  position: absolute;
  top: 196px;
  left: 238px;
  width: 4px;
  height: 32px;
  background: #000;
}

/* bottom panel */
.taskbar {
  display: flex;
  align-items: center;
  flex: none;
  height: 56px;
  background: var(--chrome);
  color: #dfdbd2;
  font: 29px/40px "Noto Sans", "Noto Sans CJK SC", sans-serif;
  text-shadow: 2px 2px 1px #000;
}
.show-desktop {
  padding: 4px 9px 0 1px;
}
.taskbar .grip {
  margin-right: 6px;
}
.task {
  gap: 17px;
  width: 428px;
  height: 52px;
  padding-left: 8px;
  border-radius: 4px;
  background: #302f2c;
}
.task svg {
  margin-top: 4px;
}
.pager {
  display: flex;
  align-items: center;
  gap: 2px;
  margin-left: auto;
  padding-right: 6px;
}
.ws {
  justify-content: center;
  width: 88px;
  height: 56px;
  background: #2b2a28;
}
.ws.current {
  height: 52px;
  padding-top: 4px;
  border: 2px solid #e9eae4;
  background: #a5bd82;
  box-shadow: 0 2px #5d7338, 0 -2px #5d7338;
}
.trash {
  margin-left: 4px;
}
</style>
